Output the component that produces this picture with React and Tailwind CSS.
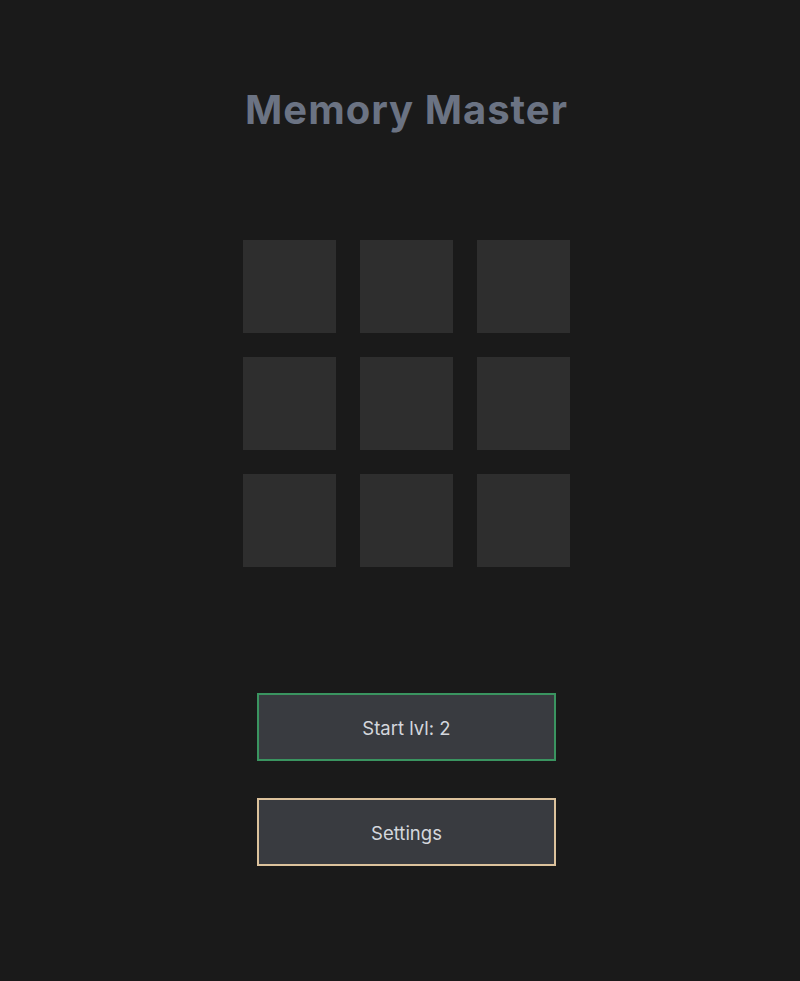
export default function App() {
  const tiles = [0, 1, 2, 3, 4, 5, 6, 7, 8];
  return (
    <div className="min-h-[981px] w-full bg-[#1a1a1a] flex flex-col items-center pl-[13px] font-['Inter','Noto_Sans',sans-serif]">
      <h1 className="mt-[86px] text-[40px] leading-[48px] tracking-[1px] font-bold text-[#6b7383]">Memory Master</h1>
      <div className="mt-[106px] grid grid-cols-3 gap-[24px]">
        {tiles.map((i) => (
          <div key={i} className="w-[93px] h-[93px] bg-[#2e2e2e]" />
        ))}
      </div>
      <div className="mt-[126px] flex flex-col gap-[37px]">
        <button className="w-[299px] h-[68px] pt-[4px] bg-[#393b40] border-2 border-solid border-[#3a9460] text-[#d4d7dd] text-[18.5px]">Start lvl: 2</button>
        <button className="w-[299px] h-[68px] pt-[4px] bg-[#393b40] border-2 border-solid border-[#dcc29c] text-[#d4d7dd] text-[18.5px]">Settings</button>
      </div>
    </div>
  );
}
